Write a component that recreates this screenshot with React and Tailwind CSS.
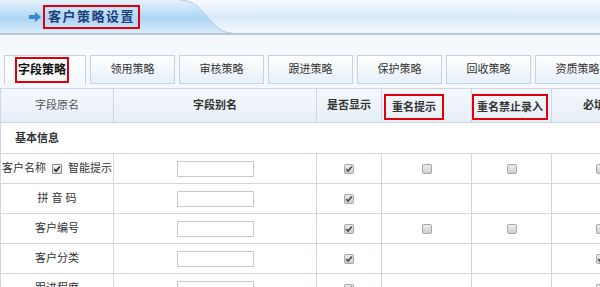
import React from "react";

const TABS = ["字段策略", "领用策略", "审核策略", "跟进策略", "保护策略", "回收策略", "资质策略"];

const ROWS = [
  { name: "拼 音 码", show: true, dup: null, forbid: null, req: null },
  { name: "客户编号", show: true, dup: false, forbid: false, req: false },
  { name: "客户分类", show: true, dup: null, forbid: null, req: true },
  { name: "跟进程度", show: true, dup: null, forbid: null, req: false },
];

function Box({ checked }) {
  return (
    <span className="inline-flex w-[10px] h-[10px] items-center justify-center rounded-[2px] border border-[#a7a7a7] bg-gradient-to-b from-[#ececec] to-[#cfcfcf] align-middle">
      {checked && (
        <svg width="8" height="8" viewBox="0 0 8 8">
          <path d="M1.2 4.2 L3.1 6 L6.8 1.6" fill="none" stroke="#4a4a4a" strokeWidth="1.6" />
        </svg>
      )}
    </span>
  );
}

function Cell({ v }) {
  return (
    <td className="border border-[#cdd6e2] text-center">
      {v !== null && v !== undefined && <Box checked={v} />}
    </td>
  );
}

export default function App() {
  return (
    <div
      className="w-[600px] h-[287px] overflow-hidden bg-[#f5f9fd] text-[11px] text-[#333]"
      style={{ fontFamily: '"Liberation Sans", "Noto Sans CJK SC", sans-serif' }}
    >
      {/* Title bar */}
      <div className="relative h-[35px] border-b-2 border-[#b4c8dc] bg-gradient-to-b from-[#f2f8fd] via-[#d3e9fa] to-[#eef6fd]">
        <svg className="absolute inset-0" width="600" height="33" viewBox="0 0 600 33" preserveAspectRatio="none">
          <defs>
            <linearGradient id="lt" x1="0" y1="0" x2="0" y2="1">
              <stop offset="0" stopColor="#f7fbfe" />
              <stop offset="0.5" stopColor="#d9eaf9" />
              <stop offset="1" stopColor="#f4f9fd" />
            </linearGradient>
            <linearGradient id="dk" x1="0" y1="0" x2="0" y2="1">
              <stop offset="0" stopColor="#e6f2fc" />
              <stop offset="0.55" stopColor="#acd5f5" />
              <stop offset="1" stopColor="#d9ecfa" />
            </linearGradient>
          </defs>
          <rect x="0" y="0" width="600" height="33" fill="url(#dk)" />
          <path d="M180 0 C205 0 210 33 232 33 L600 33 L600 0 Z" fill="url(#lt)" />
          <path d="M180 0 C205 0 210 33 232 33" fill="none" stroke="#a9cbe6" strokeWidth="1" />
        </svg>
        <div className="relative flex items-center h-[33px] pl-[29px]">
          <svg width="12" height="10" viewBox="0 0 12 10" className="mr-[2px]">
            <path d="M0 3 H6 V0 L12 5 L6 10 V7 H0 Z" fill="#3a86cc" />
          </svg>
          <div className="h-[24px] mt-[1px] border-2 border-[#e0000b] flex items-center px-[3px]">
            <span className="text-[13px] font-bold tracking-[1.5px] whitespace-nowrap text-[#1d3f7c]">客户策略设置</span>
          </div>
        </div>
      </div>

      {/* Tabs */}
      <div className="flex gap-[4px] pl-[4px] pt-[20px] h-[53px]">
        {TABS.map((t, i) =>
          i === 0 ? (
            <div
              key={t}
              className="shrink-0 w-[82px] h-[30px] border border-b-0 border-[#c6d2de] bg-gradient-to-b from-[#ffffff] to-[#f3f8fc] flex items-start pl-[10px] pt-[1px]"
            >
              <div className="h-[26px] w-[54px] border-2 border-[#e0000b] flex items-center justify-center">
                <span className="text-[12px] font-bold whitespace-nowrap text-[#111]">{t}</span>
              </div>
            </div>
          ) : (
            <div
              key={t}
              className="shrink-0 w-[85px] h-[29px] border border-[#c6d2de] bg-gradient-to-b from-[#ffffff] to-[#e6f0f9] flex items-center justify-center whitespace-nowrap"
            >
              {t}
            </div>
          )
        )}
      </div>

      {/* Table */}
      <table className="table-fixed border-collapse bg-white" style={{ width: 650 }}>
        <colgroup>
          <col className="w-[113px]" />
          <col className="w-[203px]" />
          <col className="w-[65px]" />
          <col className="w-[90px]" />
          <col className="w-[80px]" />
          <col className="w-[99px]" />
        </colgroup>
        <thead>
          <tr className="h-[34px] bg-gradient-to-b from-[#f4f8fc] to-[#e6eef7]">
            <th className="border border-[#cdd6e2] font-normal text-[#555]">字段原名</th>
            <th className="border border-[#cdd6e2] font-bold">字段别名</th>
            <th className="border border-[#cdd6e2] font-bold">是否显示</th>
            <th className="border border-[#cdd6e2] font-bold text-left pl-[2px] pt-[3px]">
              <div className="h-[26px] w-[60px] border-2 border-[#e0000b] flex items-center justify-center whitespace-nowrap">重名提示</div>
            </th>
            <th className="border border-[#cdd6e2] font-bold text-left pl-0 pt-[3px]">
              <div className="h-[26px] w-[76px] border-2 border-[#e0000b] flex items-center justify-center whitespace-nowrap">重名禁止录入</div>
            </th>
            <th className="border border-[#cdd6e2] font-bold text-left pl-[31px] whitespace-nowrap">必填</th>
          </tr>
        </thead>
        <tbody>
          <tr className="h-[31px]">
            <td colSpan={6} className="border border-[#cdd6e2] pl-[14px] font-bold">基本信息</td>
          </tr>
          <tr className="h-[30px]">
            <td className="border border-[#cdd6e2] pl-[1px] whitespace-nowrap">
              <span className="inline-flex items-center gap-[6px]">
                客户名称
                <span className="inline-flex w-[10px] h-[10px] items-center justify-center rounded-[1px] border border-[#8a8a8a] bg-gradient-to-b from-[#f4f4f4] to-[#d6d6d6]">
                  <svg width="8" height="8" viewBox="0 0 8 8">
                    <path d="M1.2 4.2 L3.1 6 L6.8 1.6" fill="none" stroke="#222" strokeWidth="1.6" />
                  </svg>
                </span>
                智能提示
              </span>
            </td>
            <td className="border border-[#cdd6e2] text-center">
              <input className="w-[77px] h-[16px] border border-[#c8c8c8] bg-white align-middle" />
            </td>
            <Cell v={true} />
            <Cell v={false} />
            <Cell v={false} />
            <td className="border border-[#cdd6e2] pl-[44px]"><Box checked={false} /></td>
          </tr>
          {ROWS.map((r) => (
            <tr key={r.name} className="h-[30px]">
              <td className="border border-[#cdd6e2] text-center">{r.name}</td>
              <td className="border border-[#cdd6e2] text-center">
                <input className="w-[77px] h-[16px] border border-[#c8c8c8] bg-white align-middle" />
              </td>
              <Cell v={r.show} />
              <Cell v={r.dup} />
              <Cell v={r.forbid} />
              <td className="border border-[#cdd6e2] pl-[44px]">
                {r.req !== null && <Box checked={r.req} />}
              </td>
            </tr>
          ))}
        </tbody>
      </table>
    </div>
  );
}
